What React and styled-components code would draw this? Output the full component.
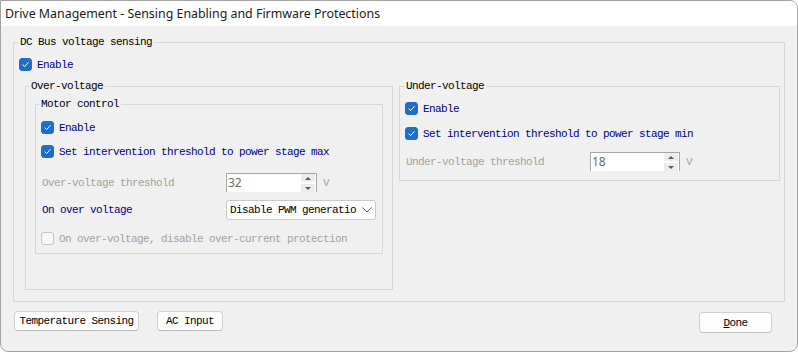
import React from 'react'
import styled, { createGlobalStyle } from 'styled-components'

const GlobalStyle = createGlobalStyle`
  html, body {
    margin: 0;
    padding: 0;
    background: #ffffff;
  }
  body {
    font-family: "Liberation Mono", "DejaVu Sans Mono", monospace;
    font-size: 11px;
    letter-spacing: -0.6px;
  }
`

const Window = styled.div`
  width: 798px;
  height: 352px;
  box-sizing: border-box;
  border: 1px solid #a3a3a3;
  border-radius: 0 8px 8px 8px;
  background: #f0f0f0;
  display: flex;
  flex-direction: column;
  overflow: hidden;
`

const TitleBar = styled.div`
  height: 25px;
  flex: none;
  background: #ffffff;
  display: flex;
  align-items: center;
  padding-left: 4px;
  font-family: "Noto Sans", "Open Sans", sans-serif;
  font-size: 12.4px;
  letter-spacing: 0;
  color: #1a1a1a;
`

const Body = styled.div`
  flex: 1;
  display: flex;
  flex-direction: column;
  padding: 16px 12px 0;
`

const Group = styled.div`
  border: 1px solid #d7d7d7;
  display: flex;
  flex-direction: column;
  padding: ${p => p.$pad};
  margin-top: ${p => p.$mt || 0}px;
`

const Legend = styled.span`
  align-self: flex-start;
  height: 14px;
  line-height: 14px;
  margin: -8px 0 0 ${p => p.$x}px;
  padding: 0 2px;
  background: #f0f0f0;
  color: #000000;
  white-space: nowrap;
`

const Columns = styled.div`
  display: grid;
  grid-template-columns: 368px 1fr;
  column-gap: 6px;
  align-items: start;
  margin: 15px 0 0 6px;
`

const CheckRow = styled.div`
  display: flex;
  align-items: center;
  gap: 5px;
  height: 14px;
  margin-top: ${p => p.$mt}px;
  color: ${p => (p.$disabled ? '#a2a2a2' : '#000080')};
  white-space: nowrap;
`

const CheckText = styled.span`
  padding-top: 1px;
`

const Box = styled.span`
  width: 13px;
  height: 13px;
  box-sizing: border-box;
  border-radius: 3px;
  flex: none;
  display: flex;
  align-items: center;
  justify-content: center;
  background: ${p => (p.$checked ? '#1e6ec8' : '#f7f7f7')};
  border: 1px solid ${p => (p.$checked ? '#1e6ec8' : '#c4c4c4')};
`

const FieldRow = styled.div`
  display: grid;
  grid-template-columns: 179px auto auto;
  justify-content: start;
  align-items: center;
  column-gap: 6px;
  margin-top: ${p => p.$mt}px;
  height: ${p => p.$h}px;
`

const FieldLabel = styled.span`
  padding-left: 1px;
  color: ${p => (p.$disabled ? '#a2a2a2' : '#000080')};
  white-space: nowrap;
`

const Unit = styled.span`
  color: #a2a2a2;
`

const Spin = styled.div`
  width: ${p => p.$w}px;
  height: 19px;
  box-sizing: border-box;
  border: 1px solid #a6a6a6;
  border-bottom: none;
  background: #ffffff;
  display: flex;
  align-items: flex-start;
`

const SpinValue = styled.span`
  flex: 1;
  padding: 1px 0 0 1px;
  font-family: "Noto Sans", "Open Sans", sans-serif;
  font-size: 12px;
  line-height: 16px;
  letter-spacing: 0;
  color: #6a6a6a;
`

const SpinButtons = styled.div`
  width: 14px;
  margin-right: 1px;
  display: flex;
  flex-direction: column;
  gap: 2px;
`

const SpinButton = styled.span`
  height: 8px;
  background: #ececec;
  display: flex;
  align-items: center;
  justify-content: center;

  &::after {
    content: '';
    border-left: 3px solid transparent;
    border-right: 3px solid transparent;
    ${p => (p.$down
      ? 'border-top: 3px solid #5a5a5a;'
      : 'border-bottom: 3px solid #5a5a5a;')}
  }
`

const Combo = styled.div`
  width: 150px;
  height: 20px;
  box-sizing: border-box;
  border: 1px solid #c8c8c8;
  border-radius: 3px;
  background: #ffffff;
  display: flex;
  align-items: center;
  padding-left: 3px;
  color: #000000;
`

const ComboText = styled.span`
  width: 126px;
  white-space: nowrap;
`

const BottomBar = styled.div`
  display: flex;
  align-items: flex-start;
  margin-top: 9px;
  padding: 0 13px 0 1px;
`

const Button = styled.div`
  width: ${p => p.$w}px;
  height: ${p => p.$h || 20}px;
  box-sizing: border-box;
  margin: ${p => p.$m || 0};
  border: 1px solid #d0d0d0;
  border-bottom-color: #bdbdbd;
  border-radius: 4px;
  background: #fdfdfd;
  display: flex;
  align-items: center;
  justify-content: center;
  color: #000000;
  white-space: nowrap;
`

const Check = ({ checked, disabled, mt, children }) => (
  <CheckRow $mt={mt} $disabled={disabled}>
    <Box $checked={checked}>
      {checked && (
        <svg width='9' height='9' viewBox='0 0 9 9'>
          <path d='M1.5 4.6 L3.6 6.6 L7.6 2.2' fill='none' stroke='#ffffff' strokeWidth='1' />
        </svg>
      )}
    </Box>
    <CheckText>{children}</CheckText>
  </CheckRow>
)

const SpinBox = ({ value, w }) => (
  <Spin $w={w}>
    <SpinValue>{value}</SpinValue>
    <SpinButtons>
      <SpinButton />
      <SpinButton $down />
    </SpinButtons>
  </Spin>
)

const App = () => (
  <>
    <GlobalStyle />
    <Window>
      <TitleBar>Drive Management - Sensing Enabling and Firmware Protections</TitleBar>
      <Body>
        <Group $pad='0 4px 11px 5px'>
          <Legend $x={-1}>DC Bus voltage sensing</Legend>
          <Check checked mt={8}>Enable</Check>
          <Columns>
            <Group $pad='0 9px 35px 9px'>
              <Legend $x={-6}>Over-voltage</Legend>
              <Group $pad='0 5px 8px 5px' $mt={11}>
                <Legend $x={-2}>Motor control</Legend>
                <Check checked mt={9}>Enable</Check>
                <Check checked mt={10}>Set intervention threshold to power stage max</Check>
                <FieldRow $mt={15} $h={19}>
                  <FieldLabel $disabled>Over-voltage threshold</FieldLabel>
                  <SpinBox value='32' w={91} />
                  <Unit>V</Unit>
                </FieldRow>
                <FieldRow $mt={8} $h={20}>
                  <FieldLabel>On over voltage</FieldLabel>
                  <Combo>
                    <ComboText>Disable PWM generatio</ComboText>
                    <svg width='10' height='6' viewBox='0 0 10 6' style={{ marginLeft: 6 }}>
                      <path d='M0.5 0.5 L5 5 L9.5 0.5' fill='none' stroke='#606060' strokeWidth='1' />
                    </svg>
                  </Combo>
                </FieldRow>
                <Check disabled mt={11}>On over-voltage, disable over-current protection</Check>
              </Group>
            </Group>
            <Group $pad='0 5px 9px 5px'>
              <Legend $x={-1}>Under-voltage</Legend>
              <Check checked mt={8}>Enable</Check>
              <Check checked mt={11}>Set intervention threshold to power stage min</Check>
              <FieldRow $mt={12} $h={19}>
                <FieldLabel $disabled>Under-voltage threshold</FieldLabel>
                <SpinBox value='18' w={90} />
                <Unit>V</Unit>
              </FieldRow>
            </Group>
          </Columns>
        </Group>
        <BottomBar>
          <Button $w={125}>Temperature Sensing</Button>
          <Button $w={66} $m='0 0 0 18px'>AC Input</Button>
          <Button $w={73} $h={21} $m='1px 0 0 auto'><u>D</u>one</Button>
        </BottomBar>
      </Body>
    </Window>
  </>
)

export default App
